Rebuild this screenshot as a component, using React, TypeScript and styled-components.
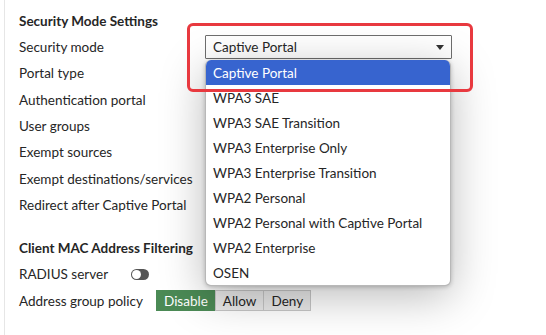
import styled, { createGlobalStyle } from "styled-components";

const GlobalStyle = createGlobalStyle`
    html, body {
        margin: 0;
        padding: 0;
        background: #ffffff;
    }
    body {
        font-family: Lato, "Open Sans", "Liberation Sans", sans-serif;
        font-size: 13.5px;
        color: #262626;
    }
`;

const SECURITY_MODES = [
    "Captive Portal",
    "WPA3 SAE",
    "WPA3 SAE Transition",
    "WPA3 Enterprise Only",
    "WPA3 Enterprise Transition",
    "WPA2 Personal",
    "WPA2 Personal with Captive Portal",
    "WPA2 Enterprise",
    "OSEN",
];

const SdivPage = styled.div`
    margin-left: 4px;
    min-height: 335px;
    box-sizing: border-box;
    border-left: 1px solid #e6e6e6;
    padding: 8px 0 0 14px;
`;
const SdivSectionTitle = styled.div<{ $gapTop?: number }>`
    height: 26px;
    display: flex;
    align-items: center;
    font-weight: 700;
    margin-top: ${(p) => p.$gapTop ?? 0}px;
`;
const SdivRow = styled.div`
    height: 26.3px;
    display: flex;
    align-items: center;
`;
const SspanLabel = styled.span<{ $width: number }>`
    width: ${(p) => p.$width}px;
    flex-shrink: 0;
    white-space: nowrap;
`;
const SdivSelectWrap = styled.div`
    position: relative;
    width: 247px;
    height: 24px;
`;
const SdivSelect = styled.div`
    box-sizing: border-box;
    height: 100%;
    border: 1px solid #6e6e6e;
    border-radius: 1px;
    background: #fff;
    display: flex;
    align-items: center;
    justify-content: space-between;
    padding: 0 7px 0 7px;
`;
const SspanCaret = styled.span`
    width: 0;
    height: 0;
    border-left: 4px solid transparent;
    border-right: 4px solid transparent;
    border-top: 5px solid #333;
`;
const SulMenu = styled.ul`
    position: absolute;
    top: 25px;
    left: 0;
    width: 246px;
    margin: 0;
    padding: 0;
    list-style: none;
    box-sizing: border-box;
    background: #fff;
    border: 1px solid rgba(0, 0, 0, 0.28);
    border-top: none;
    border-radius: 6px;
    overflow: hidden;
    box-shadow: 0 10px 45px rgba(0, 0, 0, 0.28), 0 1px 4px rgba(0, 0, 0, 0.22);
    z-index: 2;
`;
const SliOption = styled.li<{ $active?: boolean }>`
    height: 25px;
    display: flex;
    align-items: center;
    padding-left: 7px;
    white-space: nowrap;
    background: ${(p) => (p.$active ? "#3764cf" : "transparent")};
    color: ${(p) => (p.$active ? "#ffffff" : "#262626")};
`;
const SdivHighlight = styled.div`
    position: absolute;
    left: -18px;
    top: -12px;
    width: 286px;
    height: 69px;
    box-sizing: border-box;
    border: 3px solid #e8393f;
    border-radius: 6px;
    pointer-events: none;
    z-index: 3;
`;
const SdivSegment = styled.div`
    display: flex;
`;
const SbuttonSegment = styled.button<{ $active?: boolean; $h: number }>`
    font: inherit;
    height: ${(p) => p.$h}px;
    padding: 0 7px;
    margin: 0;
    margin-left: -1px;
    border: 1px solid ${(p) => (p.$active ? "#4b8a55" : "#c6c6c6")};
    background: ${(p) => (p.$active ? "#4b8a55" : "#e9e9e9")};
    color: ${(p) => (p.$active ? "#ffffff" : "#262626")};
    &:first-child {
        margin-left: 0;
    }
`;
/* control hidden under the open menu: only its left edge peeks out */
const SspanCoveredControl = styled.span`
    width: 40px;
    height: 24px;
    background: #4b8a55;
`;
const SspanToggle = styled.span`
    position: relative;
    width: 18px;
    height: 11px;
    border-radius: 6px;
    background: #555;
    &::after {
        content: "";
        position: absolute;
        left: 1px;
        top: 1px;
        width: 9px;
        height: 9px;
        border-radius: 50%;
        background: #fff;
    }
`;

const LABEL_W = 186;

const Segment = ({ items, active, h }: { items: string[]; active: number; h: number }) => (
    <SdivSegment>
        {items.map((t, i) => (
            <SbuttonSegment key={t} $active={i === active} $h={h}>
                {t}
            </SbuttonSegment>
        ))}
    </SdivSegment>
);

const App = () => {
    return (
        <>
            <GlobalStyle />
            <SdivPage>
                <SdivSectionTitle>Security Mode Settings</SdivSectionTitle>
                <SdivRow>
                    <SspanLabel $width={LABEL_W}>Security mode</SspanLabel>
                    <SdivSelectWrap>
                        <SdivSelect>
                            <span>Captive Portal</span>
                            <SspanCaret />
                        </SdivSelect>
                        <SulMenu>
                            {SECURITY_MODES.map((m, i) => (
                                <SliOption key={m} $active={i === 0}>
                                    {m}
                                </SliOption>
                            ))}
                        </SulMenu>
                        <SdivHighlight />
                    </SdivSelectWrap>
                </SdivRow>
                <SdivRow>
                    <SspanLabel $width={LABEL_W}>Portal type</SspanLabel>
                </SdivRow>
                <SdivRow>
                    <SspanLabel $width={LABEL_W}>Authentication portal</SspanLabel>
                    <SspanCoveredControl />
                </SdivRow>
                <SdivRow>
                    <SspanLabel $width={LABEL_W}>User groups</SspanLabel>
                </SdivRow>
                <SdivRow>
                    <SspanLabel $width={LABEL_W}>Exempt sources</SspanLabel>
                </SdivRow>
                <SdivRow>
                    <SspanLabel $width={LABEL_W}>Exempt destinations/services</SspanLabel>
                </SdivRow>
                <SdivRow>
                    <SspanLabel $width={LABEL_W}>Redirect after Captive Portal</SspanLabel>
                    <SspanCoveredControl />
                </SdivRow>

                <SdivSectionTitle $gapTop={17}>Client MAC Address Filtering</SdivSectionTitle>
                <SdivRow>
                    <SspanLabel $width={112}>RADIUS server</SspanLabel>
                    <SspanToggle />
                </SdivRow>
                <SdivRow>
                    <SspanLabel $width={137}>Address group policy</SspanLabel>
                    <Segment items={["Disable", "Allow", "Deny"]} active={0} h={21} />
                </SdivRow>
            </SdivPage>
        </>
    );
};

export default App;
